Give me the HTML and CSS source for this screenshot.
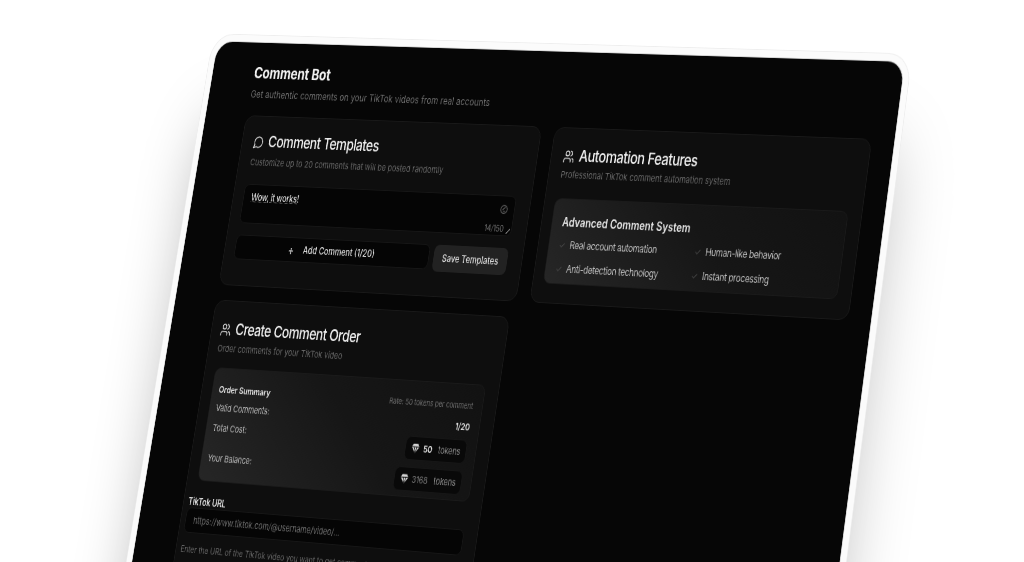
FILE: index.html
```html
<!DOCTYPE html>
<html lang="en">
<head>
<meta charset="utf-8">
<title>Comment Bot</title>
<link rel="stylesheet" href="styles.css">
</head>
<body>
<div class="device">
	<div class="page-head">
		<h1>Comment Bot</h1>
		<p>Get authentic comments on your TikTok videos from real accounts</p>
	</div>
	<div class="card-grid">
		<section class="card">
			<div class="card-head">
				<h2>
					<svg class="title-icon" viewBox="0 0 24 24"><path d="M7.9 20A9 9 0 1 0 4 16.1L2 22Z"/></svg>
					Comment Templates
				</h2>
				<p>Customize up to 20 comments that will be posted randomly</p>
			</div>
			<div class="card-body">
				<div class="comment-box">
					<span class="comment-text">Wow, it works!</span>
					<svg class="box-icon" viewBox="0 0 24 24"><circle cx="12" cy="12" r="9"/><path d="M8 13l8-6M9 16h7"/></svg>
					<span class="char-count">14/150</span>
					<span class="grip"></span>
				</div>
				<div class="btn-row">
					<div class="btn-add"><span class="plus">+</span> Add Comment (1/20)</div>
					<div class="btn-save">Save Templates</div>
				</div>
			</div>
		</section>

		<section class="card">
			<div class="card-head auto-head">
				<h2>
					<svg class="title-icon" viewBox="0 0 24 24"><path d="M16 21v-2a4 4 0 0 0-4-4H6a4 4 0 0 0-4 4v2"/><circle cx="9" cy="7" r="4"/><path d="M22 21v-2a4 4 0 0 0-3-3.87M16 3.13a4 4 0 0 1 0 7.75"/></svg>
					Automation Features
				</h2>
				<p>Professional TikTok comment automation system</p>
			</div>
			<div class="card-body auto-body">
				<div class="panel feature-panel">
					<h3>Advanced Comment System</h3>
					<ul class="feature-list">
						<li><span class="check">✓</span>Real account automation</li>
						<li><span class="check">✓</span>Human-like behavior</li>
						<li><span class="check">✓</span>Anti-detection technology</li>
						<li><span class="check">✓</span>Instant processing</li>
					</ul>
				</div>
			</div>
		</section>

		<section class="card order-card">
			<div class="card-head order-head">
				<h2>
					<svg class="title-icon" viewBox="0 0 24 24"><path d="M16 21v-2a4 4 0 0 0-4-4H6a4 4 0 0 0-4 4v2"/><circle cx="9" cy="7" r="4"/><path d="M22 21v-2a4 4 0 0 0-3-3.87M16 3.13a4 4 0 0 1 0 7.75"/></svg>
					Create Comment Order
				</h2>
				<p>Order comments for your TikTok video</p>
			</div>
			<div class="card-body order-body">
				<div class="panel order-panel">
					<div class="order-row">
						<strong>Order Summary</strong>
						<span class="rate">Rate: 50 tokens per comment</span>
					</div>
					<div class="order-row">
						<span>Valid Comments:</span>
						<strong>1/20</strong>
					</div>
					<div class="order-row">
						<span>Total Cost:</span>
						<span class="token-pill">
							<svg class="gem" viewBox="0 0 24 24"><path d="M6 3h12l4 6-10 13L2 9Z"/><path class="gem-cut" d="M2 9h20M8.500 9 12 22l3.500-13"/></svg>
							<strong>50</strong><em>tokens</em>
						</span>
					</div>
					<div class="order-row balance-row">
						<span>Your Balance:</span>
						<span class="token-pill">
							<svg class="gem" viewBox="0 0 24 24"><path d="M6 3h12l4 6-10 13L2 9Z"/><path class="gem-cut" d="M2 9h20M8.500 9 12 22l3.500-13"/></svg>
							<i>3168</i><em>tokens</em>
						</span>
					</div>
				</div>
				<label class="field-label">TikTok URL</label>
				<div class="text-input">https://www.tiktok.com/@username/video/...</div>
				<p class="field-help">Enter the URL of the TikTok video you want to get comments on</p>
			</div>
		</section>
	</div>
</div>
</body>
</html>
```

FILE: styles.css
```css
* {
	margin: 0;
	padding: 0;
	box-sizing: border-box;
}
html, body {
	width: 1024px;
	height: 562px;
	overflow: hidden;
	background: #fff;
}
body {
	font-family: Inter, "Liberation Sans", sans-serif;
	color: #ddd;
}
ul, li {
	list-style: none;
}
/* device, tilted with a homography measured off the corners */
.device {
	width: 1058px;
	height: 680px;
	padding: 24px 0 0 66px;
	overflow: hidden;
	background: #060606;
	border-radius: 24px;
	box-shadow: 0 0 0 1px #d0d0d0, 0 0 0 9px #fbfbfb, 0 0 0 10px #eeeeee, 0 100px 90px rgba(0, 0, 0, .26);
	transform-origin: 0 0;
	transform: matrix3d(.58851, .015196, 0, -.00006683, -.1405, .79713, 0, -.00004033, 0, 0, 1, 0, 218, 41.5, 0, 1);
	filter: blur(.6px);
}
.page-head {
	padding-left: 2px;
}
.page-head h1 {
	font-size: 19px;
	line-height: 28px;
	font-weight: 700;
	letter-spacing: -.2px;
	color: #f2f2f2;
}
.page-head p {
	margin-top: 4px;
	font-size: 12px;
	line-height: 16px;
	letter-spacing: .1px;
	color: #6f6f6f;
}
.card-grid {
	display: grid;
	grid-template-columns: 470px 470px;
	gap: 18px 20px;
	align-items: stretch;
	margin-top: 18px;
}
.card {
	background: #0e0e0e;
	border: 1px solid #191919;
	border-radius: 14px;
}
.order-card {
	margin-right: 6px;
}
.card-head {
	padding: 17px 18px 0;
}
.auto-head {
	padding: 19px 15px 0 18px;
}
.order-head {
	padding: 20px 14px 0;
}
.card-head h2 {
	display: flex;
	align-items: center;
	gap: 7px;
	font-size: 19px;
	line-height: 28px;
	font-weight: 500;
	letter-spacing: -.55px;
	color: #f0f0f0;
}
.card-head p {
	margin-top: 3px;
	font-size: 11px;
	line-height: 16px;
	color: #666;
}
.auto-head p {
	margin-top: 0;
}
.order-head p {
	margin-top: 1px;
}
.title-icon {
	width: 17px;
	height: 17px;
	fill: none;
	stroke: #d8d8d8;
	stroke-width: 2;
	stroke-linecap: round;
	stroke-linejoin: round;
}
.card-body {
	padding: 19px 22px 22px 16px;
}
.auto-body {
	padding: 20px 19px 22px 15px;
}
.order-body {
	padding: 15px 20px 22px 7px;
}
.comment-box {
	position: relative;
	height: 48px;
	padding: 6px 12px;
	background: #050505;
	border: 1px solid #161616;
	border-radius: 8px;
	font-size: 11.5px;
	line-height: 18px;
	font-weight: 500;
	letter-spacing: -.2px;
	color: #ddd;
}
.comment-text {
	text-decoration: underline dotted #777;
}
.box-icon {
	position: absolute;
	top: 9px;
	right: 9px;
	width: 13px;
	height: 13px;
	fill: none;
	stroke: #666;
	stroke-width: 2;
}
.char-count {
	position: absolute;
	right: 12px;
	bottom: 1px;
	font-size: 10px;
	line-height: 14px;
	font-weight: 400;
	letter-spacing: -.2px;
	color: #777;
}
.grip {
	position: absolute;
	right: 2px;
	bottom: 2px;
	width: 6px;
	height: 6px;
	background: linear-gradient(135deg, transparent 50%, #777 50%, #777 62%, transparent 62%);
}
.btn-row {
	display: flex;
	gap: 7px;
	margin-top: 14px;
}
.btn-add {
	flex: 1;
	display: flex;
	align-items: center;
	justify-content: center;
	gap: 14px;
	height: 30px;
	background: #050505;
	border: 1px solid #161616;
	border-radius: 8px;
	font-size: 11.5px;
	font-weight: 500;
	color: #ddd;
}
.plus {
	font-size: 15px;
	font-weight: 400;
}
.btn-save {
	display: flex;
	align-items: center;
	justify-content: center;
	width: 114px;
	height: 32px;
	background: #222;
	border-radius: 8px;
	font-size: 11.5px;
	font-weight: 500;
	color: #ddd;
}
.panel {
	background: linear-gradient(45deg, #262626 0%, #161616 55%, #121212 100%);
	border: 1px solid #1a1a1a;
	border-radius: 10px;
}
.feature-panel {
	height: 101px;
	padding: 17px 16px 8px 15px;
}
.feature-panel h3 {
	font-size: 14px;
	line-height: 20px;
	font-weight: 600;
	color: #e4e4e4;
}
.feature-list {
	display: grid;
	grid-template-columns: 203px 1fr;
	gap: 8px 0;
	margin-top: 7px;
}
.feature-list li {
	font-size: 12px;
	line-height: 20px;
	letter-spacing: -.4px;
	color: #bdbdbd;
}
.check {
	margin-right: 7px;
	font-size: 11px;
	color: #4a4a4a;
}
.order-panel {
	height: 136px;
	margin-left: 9px;
	padding: 16px 14px 0 10px;
}
.order-row {
	display: flex;
	align-items: flex-start;
	justify-content: space-between;
	margin-top: 6px;
	font-size: 11px;
	line-height: 18px;
	letter-spacing: -.1px;
	color: #b5b5b5;
}
.order-row:first-child {
	margin-top: 0;
}
.order-row span:first-child {
	margin-top: -2px;
}
.balance-row {
	margin-top: 8px;
}
.order-row strong {
	font-weight: 600;
	color: #e0e0e0;
}
.order-row .rate {
	margin-top: 0;
	font-size: 9.5px;
	color: #6b6b6b;
}
.token-pill {
	display: flex;
	align-items: center;
	gap: 5px;
	height: 28px;
	padding: 0 8px;
	background: #090909;
	border: 1px solid #161616;
	border-radius: 8px;
}
.token-pill em {
	font-style: normal;
	margin-left: 4px;
	color: #8a8a8a;
}
.token-pill i {
	font-style: normal;
	color: #777;
}
.gem {
	width: 14px;
	height: 14px;
	fill: #d4d4d4;
}
.gem-cut {
	fill: none;
	stroke: #090909;
	stroke-width: 1.5;
}
.field-label {
	display: block;
	margin-top: 18px;
	font-size: 11.5px;
	line-height: 14px;
	font-weight: 600;
	letter-spacing: -.2px;
	color: #ddd;
}
.text-input {
	height: 30px;
	padding: 0 12px;
	background: #050505;
	border: 1px solid #161616;
	border-radius: 8px;
	font-size: 11px;
	line-height: 28px;
	color: #6c6c6c;
}
.field-help {
	margin-top: 12px;
	font-size: 10.5px;
	line-height: 16px;
	color: #666;
}
```
